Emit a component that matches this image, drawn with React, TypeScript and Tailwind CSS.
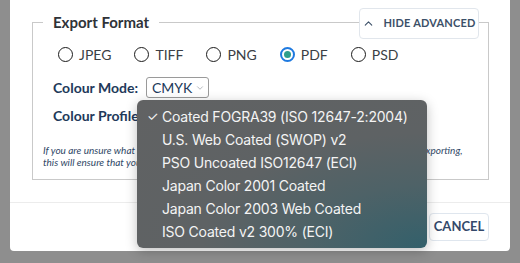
import { ChevronDown, ChevronUp } from "lucide-react";

const formats = ["JPEG", "TIFF", "PNG", "PDF", "PSD"];

const profiles = [
  "Coated FOGRA39 (ISO 12647-2:2004)",
  "U.S. Web Coated (SWOP) v2",
  "PSO Uncoated ISO12647 (ECI)",
  "Japan Color 2001 Coated",
  "Japan Color 2003 Web Coated",
  "ISO Coated v2 300% (ECI)",
];

function Radio({ label, checked }: { label: string; checked?: boolean }) {
  return (
    <label className="flex items-center gap-[6px] text-[14px] text-[#3b3f45]">
      {checked ? (
        <span className="flex h-[15px] w-[15px] items-center justify-center rounded-full border-[2px] border-[#1f7ae0] bg-white">
          <span className="h-[7px] w-[7px] rounded-full bg-[#2e9e8c]" />
        </span>
      ) : (
        <span className="h-[15px] w-[15px] rounded-full border-[1.5px] border-[#1b1b1b] bg-white" />
      )}
      {label}
    </label>
  );
}

export default function App() {
  return (
    <div className="relative h-[263px] w-[520px] overflow-hidden bg-[#8e8e8e] font-['Lato','Noto_Sans',sans-serif]">
      <div className="ml-[10px] flex h-[251px] w-[500px] flex-col rounded-b-[4px] bg-white">
        <div className="relative px-[22px] pt-[12px]">
          <fieldset className="h-[168px] w-[457px] border border-[#c9c9c9] pl-[10px]">
            <legend className="px-[10px] text-[15px] leading-[20px] font-bold text-[#2f3338]">
              Export Format
            </legend>
            <div className="pl-[15px] pt-[12px]">
              <div className="flex items-center gap-[23px]">
                {formats.map((f) => (
                  <Radio key={f} label={f} checked={f === "PDF"} />
                ))}
              </div>
            </div>
            <div className="mt-[12px] flex items-center gap-[8px] pl-[10px]">
              <span className="text-[14px] font-bold text-[#22395a]">Colour Mode:</span>
              <div className="flex h-[21px] items-center gap-[3px] rounded-[3px] border border-[#9a9a9a] pr-[3px] pl-[5px] text-[14px] text-[#22395a]">
                CMYK
                <ChevronDown size={10} strokeWidth={1.5} className="text-[#8a8f96]" />
              </div>
            </div>
            <div className="mt-[7px] flex items-center gap-[11px] pl-[10px]">
              <span className="text-[14px] font-bold text-[#22395a]">Colour Profile:</span>
            </div>
            <p className="mt-[18px] text-[10px] leading-[12px] whitespace-nowrap italic text-[#2f4766]">
              If you are unsure what colour profile to choose, please check with your print provider before exporting,
              <br />
              this will ensure that your artwork prints with the colours you expect.
            </p>
          </fieldset>
          <button className="absolute top-[8px] left-[349px] flex h-[31px] w-[120px] items-center justify-center gap-[8px] rounded-[4px] border border-[#e1e6ec] bg-white text-[11px] font-bold tracking-[0.2px] text-[#3c5068]">
            <ChevronUp size={13} strokeWidth={2} />
            HIDE ADVANCED
          </button>
        </div>
        <div className="mt-[22px] flex flex-1 items-center justify-end border-t border-[#ececec] pr-[21px]">
          <button className="h-[28px] w-[60px] rounded-[4px] border border-[#dfe6ee] text-[13px] font-bold text-[#34496a]">
            CANCEL
          </button>
        </div>
      </div>

      <div className="absolute top-[100px] left-[137px] w-[290px] rounded-[6px] bg-[radial-gradient(ellipse_at_100%_100%,#33606b_0%,#4e6267_30%,#5e6264_55%,#616263_100%)] py-[5px] font-['Inter','Liberation_Sans',sans-serif] text-[14px] tracking-[-0.2px] text-[#f4f4f4] shadow-[0_3px_12px_rgba(0,0,0,0.25)]">
        {profiles.map((p, i) => (
          <div key={p} className="flex h-[23px] items-center">
            <span className="w-[25px] pl-[10px] text-[13px]">{i === 0 ? "✓" : ""}</span>
            {p}
          </div>
        ))}
      </div>
    </div>
  );
}
